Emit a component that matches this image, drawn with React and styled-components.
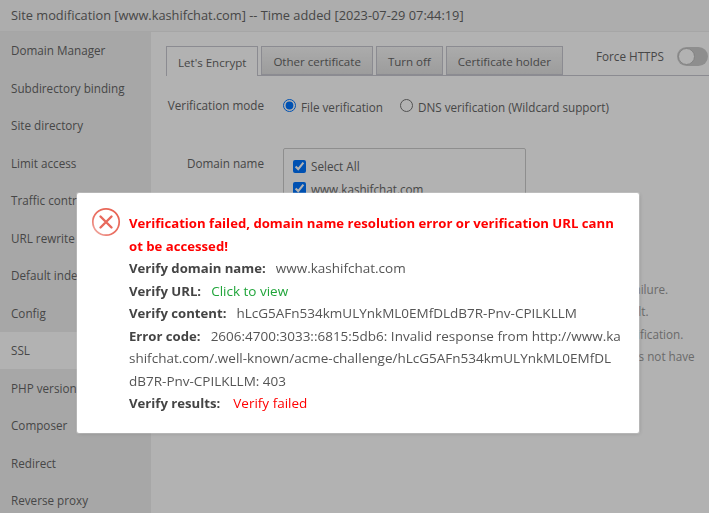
import React from "react"
import styled, { createGlobalStyle } from "styled-components"

const GlobalStyle = createGlobalStyle`
  html, body {
    margin: 0;
    height: 100%;
    overflow: hidden;
    background: #fff;
  }
  body {
    font-family: "Open Sans", "Liberation Sans", sans-serif;
    font-size: 11.7px;
    color: #666;
  }
  * {
    box-sizing: border-box;
  }
`

const Page = styled.div`
  width: 709px;
  height: 513px;
  display: flex;
  flex-direction: column;
  overflow: hidden;
`

const TitleBar = styled.div`
  height: 31.6px;
  flex: none;
  padding: 0 11px;
  display: flex;
  align-items: center;
  font-size: 12.8px;
  color: #666;
  background: #f8f8f8;
  border-bottom: 1px solid #eee;
  white-space: nowrap;
`

const Body = styled.div`
  flex: 1;
  display: flex;
  min-height: 0;
`

const Sidebar = styled.ul`
  width: 151px;
  flex: none;
  margin: 0;
  padding: 0;
  list-style: none;
  background: #f0f0f0;
`

const SideItem = styled.li`
  height: 37.5px;
  padding-left: 11px;
  display: flex;
  align-items: center;
  white-space: nowrap;
  background: ${props => (props.$active ? "#fff" : "transparent")};
`

const Content = styled.div`
  flex: 1;
  padding: 14.4px 0 0 15px;
  min-width: 0;
`

const TabBar = styled.div`
  height: 30px;
  display: flex;
  gap: 3px;
  border-bottom: 1px solid #c8c8d0;
`

const Tab = styled.div`
  height: ${props => (props.$active ? "30px" : "29px")};
  padding: 2px 11px 0;
  display: flex;
  align-items: center;
  font-size: 11.55px;
  border: 1px solid #c8c8d0;
  border-bottom: ${props => (props.$active ? "0" : "1px solid #c8c8d0")};
  background: ${props => (props.$active ? "#fff" : "linear-gradient(#f6f6f6, #e0e0e0)")};
  white-space: nowrap;
`

const ForceHttps = styled.div`
  margin-left: auto;
  margin-top: 1px;
  padding-right: 1px;
  height: 19px;
  display: flex;
  align-items: center;
  gap: 13px;
`

const Toggle = styled.div`
  width: 31px;
  height: 19px;
  padding: 1px;
  border-radius: 10px;
  background: #ccc;
`

const Knob = styled.div`
  width: 17px;
  height: 17px;
  border-radius: 50%;
  background: #fff;
  border: 1px solid #bbb;
`

const Row = styled.div`
  display: flex;
  margin-top: ${props => props.$top}px;
`

const Label = styled.div`
  width: 98px;
  flex: none;
  text-align: right;
  line-height: 18px;
  margin-right: 19px;
  white-space: nowrap;
  margin-top: ${props => props.$top || 0}px;
`

const RadioGroup = styled.div`
  display: flex;
  align-items: center;
  height: 18px;
  margin-top: 2px;
`

const RadioOption = styled.label`
  display: flex;
  align-items: center;
  gap: 5px;
  margin-right: 17px;
  white-space: nowrap;
`

const Radio = styled.input.attrs({ type: "radio", name: "mode" })`
  width: 13px;
  height: 13px;
  margin: 0 0 2px;
  accent-color: #0075ff;
`

const DomainBox = styled.div`
  width: 243px;
  height: 120px;
  padding: 6px 9px;
  border: 1px solid #ccc;
  border-radius: 2px;
`

const DomainRow = styled.label`
  height: 22.5px;
  display: flex;
  align-items: center;
  gap: 5px;
`

const Check = styled.input.attrs({ type: "checkbox", defaultChecked: true })`
  width: 13px;
  height: 13px;
  margin: 0;
  accent-color: #0075ff;
`

const Tips = styled.ul`
  margin: 0;
  padding: 0 0 0 19px;
  list-style: none;
  color: #999;
`

const Tip = styled.li`
  height: 22.5px;
  line-height: 22.5px;
  white-space: nowrap;
`

const Shade = styled.div`
  position: fixed;
  inset: 0;
  background: rgba(0, 0, 0, 0.3);
  padding: 193px 0 0 77px;
`

const Modal = styled.div`
  width: 562px;
  height: 240px;
  padding: 19px 14px 0 14px;
  display: flex;
  gap: 8px;
  background: #fff;
  border-radius: 2px;
  box-shadow: 0 0 0 1px rgba(255, 255, 255, 0.2), 1px 1px 4px rgba(0, 0, 0, 0.15);
  font-size: 13.5px;
  line-height: 22.5px;
  color: #555;
`

const IconWrap = styled.div`
  width: 30px;
  height: 30px;
  flex: none;
  margin-top: -5px;
`

const Messages = styled.div`
  flex: 1;
  min-width: 0;
  word-break: break-all;
`

const Headline = styled.div`
  color: #ff0000;
  font-weight: 700;
  font-size: 13.17px;
`

const Line = styled.div``

const Key = styled.b`
  font-size: 13.17px;
  font-weight: 700;
  color: #444;
  margin-right: ${props => props.$gap || 10}px;
`

const Value = styled.span`
  color: ${props => props.$color || "#555"};
`

const sideItems = [
  "Domain Manager",
  "Subdirectory binding",
  "Site directory",
  "Limit access",
  "Traffic control",
  "URL rewrite",
  "Default index",
  "Config",
  "SSL",
  "PHP version",
  "Composer",
  "Redirect",
  "Reverse proxy",
]

const tabs = ["Let's Encrypt", "Other certificate", "Turn off", "Certificate holder"]

const tips = [
  "Before applying, ensure the domain name is resolved, or it may cause verification failure.",
  "Let's Encrypt free certificates are valid for 3 months and are then renewed by default.",
  "If the site uses a CDN or a 301 redirect, it may then cause a failed domain name verification.",
  "When the site is using non-default index, the domain name certificate currently does not have",
]

const ErrorIcon = () => (
  <svg width="30" height="30" viewBox="0 0 30 30" fill="none">
    <defs>
      <linearGradient id="ring" x1="1" y1="0" x2="0" y2="1">
        <stop offset="0" stopColor="#e8604f" />
        <stop offset="0.7" stopColor="#ea7468" />
        <stop offset="1" stopColor="#f4c4bd" />
      </linearGradient>
    </defs>
    <circle cx="15" cy="15" r="13.2" stroke="url(#ring)" strokeWidth="1.7" />
    <path d="M9.5 9.5l11 11M20.5 9.5l-11 11" stroke="#e8695c" strokeWidth="2.4" strokeLinecap="round" />
  </svg>
)

const App = () => (
  <Page>
    <GlobalStyle />
    <TitleBar>Site modification [www.kashifchat.com] -- Time added [2023-07-29 07:44:19]</TitleBar>
    <Body>
      <Sidebar>
        {sideItems.map(item => (
          <SideItem key={item} $active={item === "SSL"}>
            {item}
          </SideItem>
        ))}
      </Sidebar>
      <Content>
        <TabBar>
          {tabs.map((tab, i) => (
            <Tab key={tab} $active={i === 0}>
              {tab}
            </Tab>
          ))}
          <ForceHttps>
            Force HTTPS
            <Toggle>
              <Knob />
            </Toggle>
          </ForceHttps>
        </TabBar>
        <Row $top={20}>
          <Label>Verification mode</Label>
          <RadioGroup>
            <RadioOption>
              <Radio defaultChecked />
              File verification
            </RadioOption>
            <RadioOption>
              <Radio />
              DNS verification (Wildcard support)
            </RadioOption>
          </RadioGroup>
        </Row>
        <Row $top={32}>
          <Label $top={6}>Domain name</Label>
          <DomainBox>
            <DomainRow>
              <Check />
              Select All
            </DomainRow>
            <DomainRow>
              <Check />
              www.kashifchat.com
            </DomainRow>
          </DomainBox>
        </Row>
        <Row $top={10}>
          <Tips>
            {tips.map(tip => (
              <Tip key={tip}>{tip}</Tip>
            ))}
          </Tips>
        </Row>
      </Content>
    </Body>
    <Shade>
      <Modal>
        <IconWrap>
          <ErrorIcon />
        </IconWrap>
        <Messages>
          <Headline>
            Verification failed, domain name resolution error or verification URL cann
            <br />
            ot be accessed!
          </Headline>
          <Line>
            <Key>Verify domain name:</Key>
            <Value>www.kashifchat.com</Value>
          </Line>
          <Line>
            <Key>Verify URL:</Key>
            <Value $color="#20a53a">Click to view</Value>
          </Line>
          <Line>
            <Key>Verify content:</Key>
            <Value>hLcG5AFn534kmULYnkML0EMfDLdB7R-Pnv-CPILKLLM</Value>
          </Line>
          <Line>
            <Key>Error code:</Key>
            <Value>
              2606:4700:3033::6815:5db6: Invalid response from http://www.ka
              <br />
              shifchat.com/.well-known/acme-challenge/hLcG5AFn534kmULYnkML0EMfDL
              <br />
              dB7R-Pnv-CPILKLLM: 403
            </Value>
          </Line>
          <Line>
            <Key $gap={13}>Verify results:</Key>
            <Value $color="#ff0000">Verify failed</Value>
          </Line>
        </Messages>
      </Modal>
    </Shade>
  </Page>
)

export default App
